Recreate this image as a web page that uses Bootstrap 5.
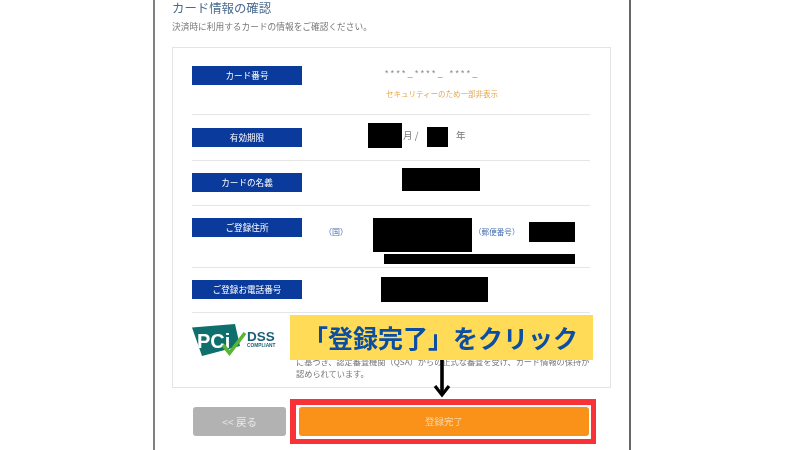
<!DOCTYPE html>
<html lang="ja">
<head>
<meta charset="utf-8">
<title>カード情報の確認</title>
<link rel="stylesheet" href="https://cdn.jsdelivr.net/npm/bootstrap@5.3.0/dist/css/bootstrap.min.css">
<style>
html,body{height:450px;overflow:hidden;background:#fff;}
body{font-family:"Noto Sans CJK JP","Liberation Sans",sans-serif;color:#666;font-size:8.5px;line-height:1.2;}
.sheet{width:478px;height:450px;margin-left:153px;border-left:2px solid #808080;border-right:2px solid #666;padding-left:17px;position:relative;}
.soft{filter:blur(.45px);}
.ttl{font-size:12.4px;line-height:14px;color:#4a6b8f;margin:0;padding-top:1px;font-weight:400;}
.sub{font-size:8.7px;line-height:12px;color:#777;margin:6px 0 0;}
.sheetcard{width:439px;height:341px;margin-top:14px;padding:0 20px 0 19px;border:1px solid #e4e4e4;border-radius:0;box-shadow:none;}
.rw{border-bottom:1px solid #e6e6e6;}
.r1{height:67px;} .r2{height:46px;} .r3{height:45px;} .r4{height:62px;} .r5{height:45px;}
.lbl{width:110px;height:19px;flex:none;margin-top:12px;background:#0a3a9c;color:#fff;font-size:8.6px;line-height:18px;text-align:center;}
.r1 .lbl{margin-top:18px;} .r2 .lbl{margin-top:13px;}
.rd{background:#000;flex:none;}
.masked{margin:19px 0 0 83px;font-size:8.5px;line-height:12px;color:#888;letter-spacing:2.4px;font-family:"Liberation Sans",sans-serif;white-space:nowrap;}
.note{margin:9px 0 0 84px;font-size:7.5px;line-height:12px;color:#e5a64a;white-space:nowrap;}
.b1{width:34px;height:25px;margin:8px 0 0 66px;}
.t1{margin:15px 0 0 1px;font-size:9.5px;color:#777;width:24px;}
.b2{width:21px;height:20px;margin:12px 0 0 0;}
.t2{margin:15px 0 0 8px;font-size:9.5px;color:#777;}
.b3{width:78px;height:23px;margin:7px 0 0 100px;}
.t3{margin:21px 0 0 22px;width:18px;font-size:8px;color:#4a70b0;white-space:nowrap;}
.b4{width:99px;height:34px;margin:12px 0 0 31px;}
.t4{margin:21px 0 0 2px;width:43px;font-size:7.6px;color:#4a70b0;white-space:nowrap;}
.b5{width:46px;height:20px;margin:16px 0 0 12px;}
.b6{width:191px;height:10px;margin:2px 0 0 82px;}
.b7{width:107px;height:25px;margin:9px 0 0 79px;}
.pcirow{height:73px;}
.logo{width:86px;height:36px;flex:none;margin-top:11px;}
.legal{margin:42px 0 0 18px;font-size:8.2px;line-height:12px;color:#777;white-space:nowrap;}
.actions{margin:11px 0 0 21px;}
.back{width:93px;height:29px;margin-top:8px;padding:0;border:0;border-radius:3px;background:#b2b2b2;color:#e9e9e9;font-size:10.5px;line-height:29px;}
.frame{width:306px;height:45px;margin-left:4px;border:6px solid #f93238;border-right-width:5px;border-bottom-width:5px;padding:2px 2px 3px 3px;background:#fff;}
.go{display:block;width:100%;height:29px;padding:0;border:0;border-radius:3px;background:#fa9119;color:#f6d6a8;font-size:9.5px;line-height:29px;}
.callout{position:absolute;left:135px;top:315px;width:303px;height:45px;background:#ffdb58;color:#0b4ea2;font-size:25px;font-weight:700;line-height:44px;white-space:nowrap;padding-left:13px;}
.arrow{position:absolute;left:277px;top:360px;width:20px;height:38px;}
</style>
</head>
<body>
<div class="sheet">
  <div class="soft">
    <h1 class="ttl">カード情報の確認</h1>
    <p class="sub">決済時に利用するカードの情報をご確認ください。</p>
    <div class="card sheetcard">
      <div class="rw r1 d-flex align-items-start">
        <div class="lbl">カード番号</div>
        <div>
          <div class="masked">****_****_ ****_</div>
          <div class="note">セキュリティーのため一部非表示</div>
        </div>
      </div>
      <div class="rw r2 d-flex align-items-start">
        <div class="lbl">有効期限</div>
        <div class="rd b1"></div>
        <div class="t1">月 /</div>
        <div class="rd b2"></div>
        <div class="t2">年</div>
      </div>
      <div class="rw r3 d-flex align-items-start">
        <div class="lbl">カードの名義</div>
        <div class="rd b3"></div>
      </div>
      <div class="rw r4 d-flex align-items-start">
        <div class="lbl">ご登録住所</div>
        <div class="d-flex flex-column">
          <div class="d-flex align-items-start">
            <div class="t3">（国）</div>
            <div class="rd b4"></div>
            <div class="t4">（郵便番号）</div>
            <div class="rd b5"></div>
          </div>
          <div class="rd b6"></div>
        </div>
      </div>
      <div class="rw r5 d-flex align-items-start">
        <div class="lbl">ご登録お電話番号</div>
        <div class="rd b7"></div>
      </div>
      <div class="pcirow d-flex align-items-start">
        <svg class="logo" viewBox="0 0 86 36" role="img" aria-label="PCI DSS Compliant">
          <polygon points="0,3.500 43,0 48,22 10,32" fill="#0f6f6c"/>
          <text x="5" y="24" font-family="Liberation Sans,sans-serif" font-size="20" font-weight="700" fill="#fff">PCi</text>
          <path d="M31 21 L37.500 29 L53 9" fill="none" stroke="#5cb531" stroke-width="3.600"/>
          <text x="55" y="17" font-family="Liberation Sans,sans-serif" font-size="13.500" font-weight="700" fill="#1a5f78">DSS</text>
          <text x="55" y="22.500" font-family="Liberation Sans,sans-serif" font-size="4.800" font-weight="700" fill="#1a5f78">COMPLIANT</text>
        </svg>
        <div class="legal">に基づき、認定審査機関（QSA）からの正式な審査を受け、カード情報の保持が<br>認められています。</div>
      </div>
    </div>
    <div class="actions d-flex align-items-start">
      <button type="button" class="btn back">&lt;&lt; 戻る</button>
      <div class="frame"><button type="button" class="btn go">登録完了</button></div>
    </div>
  </div>
  <div class="callout soft">「登録完了」をクリック</div>
  <svg class="arrow soft" viewBox="0 0 20 38" aria-hidden="true">
    <path d="M10 0 V34" stroke="#000" stroke-width="3.600" fill="none"/>
    <path d="M3 26 L10 35 L17 26" stroke="#000" stroke-width="3.200" fill="none"/>
  </svg>
</div>
<script src="https://cdn.jsdelivr.net/npm/bootstrap@5.3.0/dist/js/bootstrap.bundle.min.js"></script>
</body>
</html>
